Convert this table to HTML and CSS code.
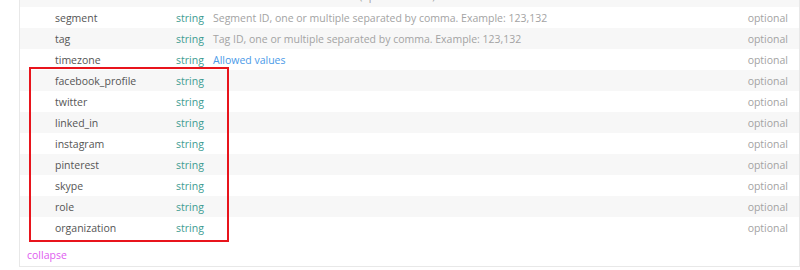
FILE: index.html
```html
<!DOCTYPE html>
<html>

<head>
  <meta charset="utf-8" />
  <link rel="stylesheet" href="styles.css">
</head>

<body>
  <div class="params">
    <div class="rows">
      <div class="row row-top">
        <span class="name">name</span>
        <span class="type">string</span>
        <span class="desc">Phone number of the contact (up to 20 chars)</span>
        <span class="opt">optional</span>
      </div>
      <div class="row">
        <span class="name">segment</span>
        <span class="type">string</span>
        <span class="desc">Segment ID, one or multiple separated by comma. Example: 123,132</span>
        <span class="opt">optional</span>
      </div>
      <div class="row">
        <span class="name">tag</span>
        <span class="type">string</span>
        <span class="desc">Tag ID, one or multiple separated by comma. Example: 123,132</span>
        <span class="opt">optional</span>
      </div>
      <div class="row">
        <span class="name">timezone</span>
        <span class="type">string</span>
        <span class="desc"><a href="javascript:void(0)" class="link">Allowed values</a></span>
        <span class="opt">optional</span>
      </div>
      <div class="row">
        <span class="name">facebook_profile</span>
        <span class="type">string</span>
        <span class="desc"></span>
        <span class="opt">optional</span>
      </div>
      <div class="row">
        <span class="name">twitter</span>
        <span class="type">string</span>
        <span class="desc"></span>
        <span class="opt">optional</span>
      </div>
      <div class="row">
        <span class="name">linked_in</span>
        <span class="type">string</span>
        <span class="desc"></span>
        <span class="opt">optional</span>
      </div>
      <div class="row">
        <span class="name">instagram</span>
        <span class="type">string</span>
        <span class="desc"></span>
        <span class="opt">optional</span>
      </div>
      <div class="row">
        <span class="name">pinterest</span>
        <span class="type">string</span>
        <span class="desc"></span>
        <span class="opt">optional</span>
      </div>
      <div class="row">
        <span class="name">skype</span>
        <span class="type">string</span>
        <span class="desc"></span>
        <span class="opt">optional</span>
      </div>
      <div class="row">
        <span class="name">role</span>
        <span class="type">string</span>
        <span class="desc"></span>
        <span class="opt">optional</span>
      </div>
      <div class="row">
        <span class="name">organization</span>
        <span class="type">string</span>
        <span class="desc"></span>
        <span class="opt">optional</span>
      </div>
      <!-- highlight round the social fields -->
      <div class="mark"></div>
    </div>
    <a href="javascript:void(0)" class="collapse">collapse</a>
  </div>
</body>
</html>
```

FILE: styles.css
```css
body {
  margin: 0 0 0 19px;
  padding: 0;
  background-color: #fff;
  font-family: "Open Sans", "Noto Sans", sans-serif;
  font-size: 10.5px;
}

.params {
  margin-top: -14px;
  border: 1px solid #e8e8e8;
  border-top: 0;
  width: 779px;
  padding-bottom: 4px;
}

.rows {
  position: relative;
}

.row {
  display: flex;
  align-items: center;
  height: 21px;
  padding: 0 11px 0 35px;
  background-color: #fff;
}

.row:nth-child(odd) {
  background-color: #f7f7f7;
}

/* list is scrolled, only the bottom of this row shows */
.row.row-top {
  box-sizing: border-box;
  padding-bottom: 2px;
}

.row-top .name,
.row-top .type,
.row-top .opt {
  align-self: flex-start;
}

.name {
  width: 121px;
  color: #555;
}

.type {
  width: 37px;
  color: #3d9c92;
}

.desc {
  flex: 1;
  color: #a3a3a3;
}

.opt {
  color: #a3a3a3;
}

.link {
  color: #4a9ae8;
  text-decoration: none;
}

.mark {
  position: absolute;
  left: 9px;
  top: 81px;
  width: 196px;
  height: 171px;
  border: 2px solid #e8141c;
}

.collapse {
  display: block;
  padding: 10px 0 0 7px;
  color: #e05cf0;
  text-decoration: none;
}
```
